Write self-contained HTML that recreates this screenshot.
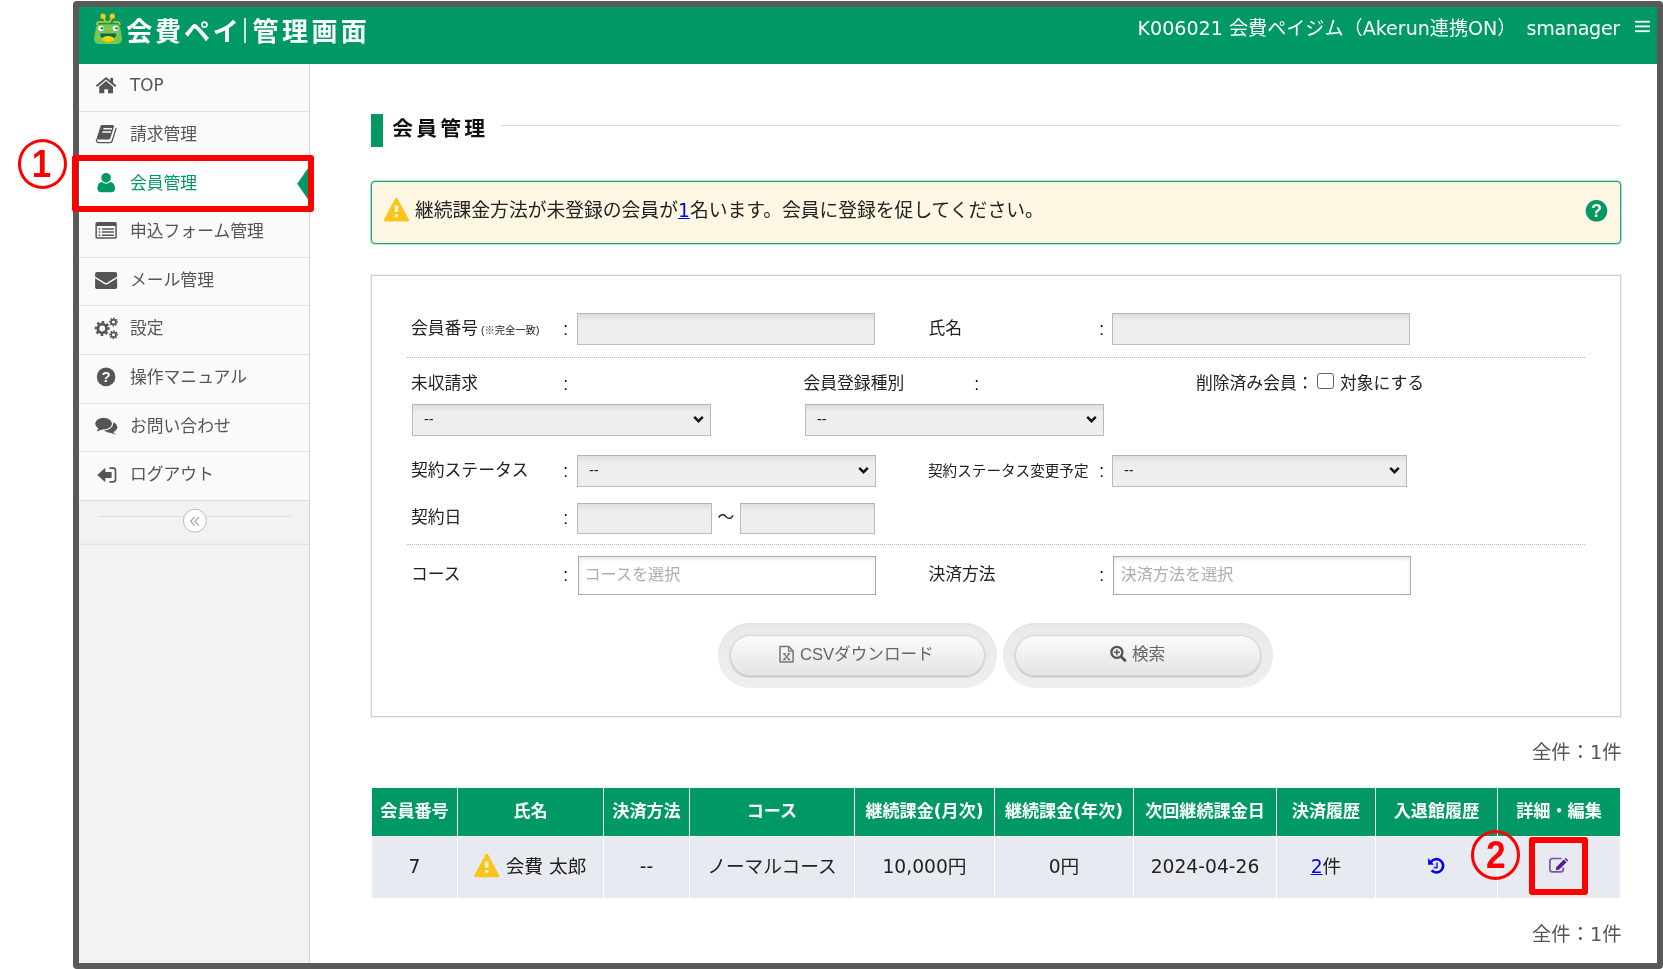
<!DOCTYPE html>
<html lang="ja">
<head>
<meta charset="utf-8">
<title>会費ペイ 管理画面</title>
<style>
*{box-sizing:border-box;margin:0;padding:0}
html,body{width:1663px;height:969px;overflow:hidden;background:#fff}
body{position:relative;font-family:"Liberation Sans","Noto Sans CJK JP",sans-serif;color:#222;font-size:16.6px}
.lat{font-family:"DejaVu Sans","Liberation Sans","Noto Sans CJK JP",sans-serif}
#frame{position:absolute;left:73px;top:1px;width:1590px;height:968px;border:6px solid #595959;border-radius:4px;background:#fff;overflow:hidden}
/* #o maps children to page coordinates */
#o{position:absolute;left:-79px;top:-7px;width:1663px;height:969px;will-change:transform}
#o div,#o span,#o svg,#o a{position:absolute;white-space:nowrap}
#o span.i,#o a.i{position:static}
#hdr{left:79px;top:7px;width:1578px;height:57px;background:#009966;color:#fff}
#hdr,#logo,#logo2,#lsep,#hdr-r{z-index:2}
#ico{z-index:3}
#logo,#logo2{top:11.5px;font-size:26px;font-weight:700;line-height:40px;color:#fff}
#logo2{left:252.6px;letter-spacing:3.4px}
#lsep{left:244.4px;top:18px;width:1.4px;height:24.5px;background:#c9eadf}
#hdr-r{left:1137.5px;top:16px;font-size:19.1px;line-height:26px;color:#fff}
#side{left:79px;top:64px;width:231px;height:899px;background:#f2f2f2;border-right:1px solid #d4d4d4}
.mi{left:79px;width:230px;height:48.6px;background:#fafafa;border-bottom:1px solid #e0e0e0;color:#555;font-size:16.8px;line-height:46.2px;padding-left:51px}
.mi.on{background:#fff;color:#009966}
#main{left:310px;top:64px;width:1347px;height:899px;background:#fff}

#tbar{left:370.5px;top:114px;width:12.5px;height:32.5px;background:#009966}
#ttl{left:392.3px;top:113px;font-size:20.8px;font-weight:700;letter-spacing:3.2px;line-height:32px;color:#111}
#tline{left:501px;top:125px;width:1119px;height:1px;background:#ddd}
#alert{left:371px;top:181px;width:1249.5px;height:63px;border:1px solid #1aa377;border-radius:4px;background:#fdf7e3;box-shadow:0 0 0 .6px rgba(26,163,119,.55)}
#atext{left:415px;top:197px;font-size:18.8px;line-height:28px;color:#222}
#atext a{color:#0000ee;text-decoration:underline}
#sbox{left:371px;top:275px;width:1249.5px;height:442px;border:1px solid #d0d0d0;background:#fff;box-shadow:0 0 0 .5px rgba(208,208,208,.6)}
.lb{font-size:16.8px;line-height:24px;color:#222}
.cl{font-size:17.6px;line-height:24px;color:#111;margin-left:.3px}
.inp{height:31.5px;border:1px solid #bbb;border-top-color:#b4b4b4;background:linear-gradient(#dfdfdf 0,#e3e3e3 2.5px,#eee 7px)}
.sel{height:31.5px;border:1px solid #bbb;border-top-color:#b4b4b4;background:linear-gradient(#dfdfdf 0,#e3e3e3 2.5px,#eee 7px);font-size:14.5px;line-height:29px;padding-left:11px;color:#222}
.sel svg{right:6px;top:10px;width:11px;height:9px}
.dot{left:407px;width:1178px;height:0;border-top:1px dotted #bbb}
.tin{height:39px;border:1px solid #aaa;background:#fff;box-shadow:inset 0 2px 4px rgba(0,0,0,.10);font-size:16.1px;line-height:34.5px;padding-left:5.5px;color:#adadad}

.bo{height:65px;border-radius:33px;background:linear-gradient(#e9e9e9,#efefef);box-shadow:inset 0 1px 2px rgba(0,0,0,.05)}
.bi{height:41px;border-radius:21px;background:linear-gradient(#fbfbfb,#e4e4e4);border:1px solid #d6d6d6;box-shadow:0 1px 2px rgba(0,0,0,.25);color:#666;font-size:16.6px;line-height:38px}
.cnt{font-size:19.3px;line-height:28px;color:#555}
.th{top:787.5px;height:48.5px;background:#009966;color:#fff;font-weight:700;font-size:17.1px;line-height:47px;text-align:center}
.td{top:837px;height:61px;background:#e8eaf2;color:#222;font-size:18.7px;line-height:60px;text-align:center}
.td a{color:#0000ee;text-decoration:underline}
</style>
</head>
<body>
<div id="frame"><div id="o">
  <div id="hdr"></div>
  <div id="logo" style="left:126.3px;letter-spacing:2.8px">会費ペイ</div><div id="lsep"></div><div id="logo2">管理画面</div>
  <div id="hdr-r" class="lat">K006021 会費ペイジム（Akerun連携ON） <span class="i" style="margin-left:4px;letter-spacing:-0.3px">smanager</span></div>
  <div id="main"></div>
  <div id="side"></div>
  <div class="mi lat" style="top:63.4px;line-height:45.8px">TOP</div>
  <div class="mi" style="top:112px">請求管理</div>
  <div class="mi on" style="top:160.6px">会員管理</div>
  <div class="mi" style="top:209.2px">申込フォーム管理</div>
  <div class="mi" style="top:257.8px">メール管理</div>
  <div class="mi" style="top:306.4px">設定</div>
  <div class="mi" style="top:355px">操作マニュアル</div>
  <div class="mi" style="top:403.6px">お問い合わせ</div>
  <div class="mi" style="top:452.2px">ログアウト</div>

  <div id="tbar"></div>
  <div id="ttl">会員管理</div>
  <div id="tline"></div>
  <div id="alert"></div>
  <div id="atext">継続課金方法が未登録の会員が<a class="i lat" href="#">1</a>名います。会員に登録を促してください。</div>
  <div id="sbox"></div>
  <div class="lb" style="left:411px;top:317px">会員番号<span class="i" style="font-size:10.3px"> (※完全一致)</span></div>
  <div class="cl" style="left:563px;top:317px">:</div>
  <div class="inp" style="left:577px;top:313px;width:297.5px"></div>
  <div class="lb" style="left:928.5px;top:317px">氏名</div>
  <div class="cl" style="left:1099px;top:317px">:</div>
  <div class="inp" style="left:1112px;top:313px;width:297.5px"></div>
  <div class="dot" style="top:357px"></div>
  <div class="lb" style="left:411px;top:371.5px">未収請求</div>
  <div class="cl" style="left:563px;top:371.5px">:</div>
  <div class="lb" style="left:803.5px;top:371.5px">会員登録種別</div>
  <div class="cl" style="left:974px;top:371.5px">:</div>
  <div class="lb" style="left:1196px;top:371.5px">削除済み会員：</div>
  <div id="cb" style="left:1316.5px;top:373px;width:17px;height:16px;border:1.5px solid #666;border-radius:3px;background:#fff"></div>
  <div class="lb" style="left:1340px;top:371.5px">対象にする</div>
  <div class="sel" style="left:412px;top:404px;height:32px;width:298.5px">--<svg viewBox="0 0 11 9"><path d="M1.2 1.8 L5.5 6.2 L9.8 1.8" fill="none" stroke="#111" stroke-width="2.4"/></svg></div>
  <div class="sel" style="left:805px;top:404px;height:32px;width:298.5px">--<svg viewBox="0 0 11 9"><path d="M1.2 1.8 L5.5 6.2 L9.8 1.8" fill="none" stroke="#111" stroke-width="2.4"/></svg></div>
  <div class="lb" style="left:411px;top:459px">契約ステータス</div>
  <div class="cl" style="left:563px;top:459px">:</div>
  <div class="sel" style="left:577px;top:455px;height:32px;width:298.5px">--<svg viewBox="0 0 11 9"><path d="M1.2 1.8 L5.5 6.2 L9.8 1.8" fill="none" stroke="#111" stroke-width="2.4"/></svg></div>
  <div class="lb" style="left:928px;top:459px;font-size:14.6px">契約ステータス変更予定</div>
  <div class="cl" style="left:1099px;top:459px">:</div>
  <div class="sel" style="left:1112px;top:455px;height:32px;width:295px">--<svg viewBox="0 0 11 9"><path d="M1.2 1.8 L5.5 6.2 L9.8 1.8" fill="none" stroke="#111" stroke-width="2.4"/></svg></div>
  <div class="lb" style="left:411px;top:506px">契約日</div>
  <div class="cl" style="left:563px;top:506px">:</div>
  <div class="inp" style="left:577px;top:503px;height:31px;width:135px"></div>
  <div class="lb" style="left:717.5px;top:506px">～</div>
  <div class="inp" style="left:740px;top:503px;height:31px;width:134.5px"></div>
  <div class="dot" style="top:544px"></div>
  <div class="lb" style="left:411px;top:563px">コース</div>
  <div class="cl" style="left:563px;top:563px">:</div>
  <div class="tin" style="left:578px;top:555.5px;width:297.5px">コースを選択</div>
  <div class="lb" style="left:928.5px;top:563px">決済方法</div>
  <div class="cl" style="left:1099px;top:563px">:</div>
  <div class="tin" style="left:1113px;top:555.5px;width:297.5px;padding-left:6.7px">決済方法を選択</div>

  <div class="bo" style="left:718px;top:622.5px;width:278.5px"></div>
  <div class="bi" style="left:730px;top:635px;width:254.5px"><span style="left:69px;top:0">CSVダウンロード</span></div>
  <div class="bo" style="left:1003px;top:622.5px;width:270px"></div>
  <div class="bi" style="left:1015px;top:635px;width:246px"><span style="left:116px;top:0">検索</span></div>
  <div class="cnt lat" style="right:41.5px;top:739px">全件：1件</div>

  <div class="th lat" style="left:372px;width:85px">会員番号</div>
  <div class="td lat" style="left:372px;width:85px">7</div>
  <div class="th lat" style="left:458px;width:145px">氏名</div>
  <div class="td lat" style="left:458px;width:145px"><span class="i" style="padding-left:31px">会費 太郎</span></div>
  <div class="th lat" style="left:604px;width:85px">決済方法</div>
  <div class="td lat" style="left:604px;width:85px">--</div>
  <div class="th lat" style="left:690px;width:164px">コース</div>
  <div class="td lat" style="left:690px;width:164px">ノーマルコース</div>
  <div class="th lat" style="left:855px;width:139px">継続課金(月次)</div>
  <div class="td lat" style="left:855px;width:139px">10,000円</div>
  <div class="th lat" style="left:995px;width:138px">継続課金(年次)</div>
  <div class="td lat" style="left:995px;width:138px">0円</div>
  <div class="th lat" style="left:1134px;width:142px">次回継続課金日</div>
  <div class="td lat" style="left:1134px;width:142px">2024-04-26</div>
  <div class="th lat" style="left:1277px;width:98px">決済履歴</div>
  <div class="td lat" style="left:1277px;width:98px"><a class="i" href="#">2</a>件</div>
  <div class="th lat" style="left:1376px;width:121px">入退館履歴</div>
  <div class="td lat" style="left:1376px;width:121px"></div>
  <div class="th lat" style="left:1498px;width:122px">詳細・編集</div>
  <div class="td lat" style="left:1498px;width:122px"></div>
  <div class="cnt lat" style="right:41.5px;top:920.5px">全件：1件</div>

  <svg id="ico" style="left:0;top:0;pointer-events:none" width="1663" height="969" viewBox="0 0 1663 969">
    <!-- frog logo -->
    <g>
      <path d="M98.6 24.6 Q108 23.8 117.8 24.6 Q119.8 24.9 120.2 27.5 Q120.8 31.5 121.6 35 Q123.4 43.8 117 44 L99 44 Q92.6 43.8 94.6 35 Q95.4 31.5 96 27.5 Q96.5 24.9 98.6 24.6 Z" fill="#78c850"/>
      <circle cx="101" cy="28.2" r="2.8" fill="#fff"/><circle cx="115.5" cy="28.2" r="2.8" fill="#fff"/>
      <circle cx="102.1" cy="28.2" r="1.3" fill="#1f7d66"/><circle cx="116.6" cy="28.2" r="1.3" fill="#1f7d66"/>
      <path d="M100.2 33.6 H116.2 Q116.6 39.8 108.2 39.8 Q99.8 39.8 100.2 33.6 Z" fill="#0a6b55"/>
      <ellipse cx="108.2" cy="39" rx="6.2" ry="2.9" fill="#ffcc00"/>
      <path d="M97 24.2 Q97 22 99.2 22 H109.6 L112.3 16.8" fill="none" stroke="#dfc60e" stroke-width="1.7" stroke-linecap="round" stroke-linejoin="round"/>
      <path d="M113.8 22 H117.6 Q119.6 22 119.7 24.2" fill="none" stroke="#dfc60e" stroke-width="1.7" stroke-linecap="round"/>
      <circle cx="112.3" cy="16.2" r="2.6" fill="#ffcc00"/><circle cx="103" cy="16.2" r="2.6" fill="#ffcc00"/>
      <path d="M103.6 17 L104.8 20.4" stroke="#ffcc00" stroke-width="1.6" stroke-linecap="round"/>
    </g>
    <!-- hamburger -->
    <rect x="1635" y="20.8" width="14.8" height="1.8" fill="#fff"/><rect x="1635" y="25.5" width="14.8" height="1.8" fill="#fff"/><rect x="1635" y="30.3" width="14.8" height="1.8" fill="#fff"/>
    <!-- home -->
    <path d="M96.4 86.2 L106.1 78.3 L115.8 86.2" fill="none" stroke="#555" stroke-width="1.9"/>
    <rect x="110.3" y="77.9" width="2.8" height="5.2" fill="#555"/>
    <path d="M99.2 86.7 L106.1 81 L113 86.7 V93.3 H108 V89.2 H104.3 V93.3 H99.2 Z" fill="#555"/>
    <!-- book -->
    <path d="M101.9 125.1 H112.6 Q114.4 125.1 113.9 126.9 L110.2 138.4 Q109.9 139.4 108.8 139.4 H97.6 Q96.3 139.4 96.7 138.1 L100.6 126.1 Q100.9 125.1 101.9 125.1 Z" fill="#555"/>
    <path d="M103.4 128.8 H112 M102.4 131.9 H111" stroke="#fafafa" stroke-width="1.5"/>
    <path d="M96.5 139.6 Q96 142.6 99 142.6 H110 Q111.6 142.6 112.1 141 L116.1 128.4" fill="none" stroke="#555" stroke-width="1.3" stroke-linecap="round"/>
    <!-- user -->
    <path d="M97.4 188.6 C97.4 184 99.8 182 102 182 L110.2 182 C112.4 182 115 184 115 188.6 C115 191 113.4 192.3 111.4 192.3 L101 192.3 C99 192.3 97.4 191 97.4 188.6 Z" fill="#009966"/>
    <circle cx="106.1" cy="177.8" r="5.4" fill="#009966" stroke="#fff" stroke-width="1.1"/>
    <!-- active arrow -->
    <path d="M309.5 166 L297.2 183.7 L309.5 201.5 Z" fill="#009966"/>
    <!-- list-alt -->
    <rect x="95.4" y="222" width="21.4" height="16.7" rx="1.8" fill="#555"/>
    <rect x="96.9" y="226" width="18.4" height="11.3" rx=".5" fill="#fafafa"/>
    <path d="M98.6 228.9 h1.7 M98.6 232.1 h1.7 M98.6 235.3 h1.7 M101.9 228.9 h12 M101.9 232.1 h12 M101.9 235.3 h12" stroke="#555" stroke-width="1.5"/>
    <!-- envelope -->
    <rect x="95.1" y="271.9" width="22" height="17.2" rx="1.8" fill="#555"/>
    <path d="M94.6 277.2 L104.7 283.4 Q106.1 284.3 107.5 283.4 L117.6 277.2" fill="none" stroke="#fafafa" stroke-width="1.4"/>
    <!-- cogs -->
    <circle cx="102.2" cy="328.5" r="6.4" fill="none" stroke="#555" stroke-width="2.2" stroke-dasharray="2.513 2.513" transform="rotate(-11.25 102.2 328.5)"/><circle cx="102.2" cy="328.5" r="4.3" fill="none" stroke="#555" stroke-width="2.8"/><circle cx="113.5" cy="322" r="3.7" fill="none" stroke="#555" stroke-width="1.5" stroke-dasharray="1.453 1.453" transform="rotate(-11.25 113.5 322)"/><circle cx="113.5" cy="322" r="2.4" fill="none" stroke="#555" stroke-width="1.7"/><circle cx="113.5" cy="334.7" r="3.7" fill="none" stroke="#555" stroke-width="1.5" stroke-dasharray="1.453 1.453" transform="rotate(-11.25 113.5 334.7)"/><circle cx="113.5" cy="334.7" r="2.4" fill="none" stroke="#555" stroke-width="1.7"/>
    <!-- question -->
    <circle cx="106.1" cy="376.9" r="9.3" fill="#555"/>
    <text x="106.1" y="382.3" text-anchor="middle" font-family="Liberation Sans,sans-serif" font-weight="700" font-size="15" fill="#fafafa">?</text>
    <!-- comments -->
    <ellipse cx="110" cy="427.2" rx="7.3" ry="5.5" fill="#555"/><path d="M112.6 431.4 L115.6 434.8 L109.8 432.6 Z" fill="#555"/>
    <ellipse cx="103.6" cy="423.6" rx="9.6" ry="7" fill="#fafafa"/>
    <ellipse cx="103.6" cy="423.6" rx="8.4" ry="5.8" fill="#555"/><path d="M98.7 427.6 L96.8 431.6 L102.8 429.2 Z" fill="#555"/>
    <!-- logout -->
    <path d="M97.3 475 L105.3 467.8 V471.9 H111.6 V478 H105.3 V482.2 Z" fill="#555"/>
    <path d="M109.4 468.2 H113 Q115.5 468.2 115.5 470.7 V479.3 Q115.5 481.8 113 481.8 H109.4" fill="none" stroke="#555" stroke-width="1.7"/>
    <!-- collapse -->
    <rect x="97.8" y="516" width="192.4" height="1" fill="#ddd"/>
    <circle cx="194.9" cy="520.7" r="11.5" fill="#fff" stroke="#bbb" stroke-width="1"/>
    <path d="M194.7 517 L190.6 521.3 L194.7 525.6 M199.1 517 L195 521.3 L199.1 525.6" fill="none" stroke="#aaa" stroke-width="1.3"/>
    <rect x="79" y="543.8" width="230" height="1" fill="#ddd"/>
    <!-- warnings -->
    <g transform="translate(383.7 197.3)"><path d="M12.75 1.7 L1.5 22.8 L24 22.8 Z" fill="#fac51a" stroke="#fac51a" stroke-width="2.6" stroke-linejoin="round"/><rect x="10.9" y="8.2" width="3.7" height="6.3" fill="#fdf3d0"/><rect x="11.1" y="16.9" width="3.3" height="3" fill="#fdf3d0"/></g><g transform="translate(474 853.1)"><path d="M12.75 1.7 L1.5 22.8 L24 22.8 Z" fill="#fac51a" stroke="#fac51a" stroke-width="2.6" stroke-linejoin="round"/><rect x="10.9" y="8.2" width="3.7" height="6.3" fill="#fdf3d0"/><rect x="11.1" y="16.9" width="3.3" height="3" fill="#fdf3d0"/></g>
    <!-- help -->
    <circle cx="1596.5" cy="210.8" r="10.8" fill="#009966"/>
    <text x="1596.5" y="217.3" text-anchor="middle" font-family="Liberation Sans,sans-serif" font-weight="700" font-size="18" fill="#fdf7e3">?</text>
    <!-- file excel -->
    <path d="M780 646.6 H788.8 L793.1 651 V662 H780 Z" fill="none" stroke="#777" stroke-width="1.5" stroke-linejoin="round"/>
    <path d="M788.6 646.6 V651.2 H793.1" fill="none" stroke="#777" stroke-width="1.3"/>
    <path d="M783.9 653.9 L789.3 659.5 M789.3 653.9 L783.9 659.5 M783 653.7 h2.6 M787.6 653.7 h2.6 M783 659.7 h2.6 M787.6 659.7 h2.6" stroke="#777" stroke-width="1.2"/>
    <!-- search plus -->
    <circle cx="1116.9" cy="652.3" r="5.5" fill="none" stroke="#555" stroke-width="2.3"/>
    <path d="M1121 656.4 L1125 660.4" stroke="#555" stroke-width="2.8" stroke-linecap="round"/>
    <path d="M1113.9 652.3 H1119.9 M1116.9 649.3 V655.3" stroke="#555" stroke-width="1.5"/>
    <!-- history -->
    <path d="M1430.8 862.2 A6.7 6.7 0 1 1 1431.6 870.4" fill="none" stroke="#0000ee" stroke-width="2.6"/>
    <path d="M1428.1 858 V864.8 H1434 Z" fill="#0000ee"/>
    <path d="M1437 862.4 V867.6 H1433.6" fill="none" stroke="#2a2af0" stroke-width="1.7"/>
    <!-- edit -->
    <path d="M1561.6 858.5 H1552.6 Q1549.9 858.5 1549.9 861.2 V869.2 Q1549.9 871.9 1552.6 871.9 H1560.6 Q1563.3 871.9 1563.3 869.2 V867.4" fill="none" stroke="#7a52a6" stroke-width="1.7"/>
    <path d="M1557.6 868.5 L1565.2 860.9" stroke="#551a8b" stroke-width="3.8"/>
    <path d="M1566 860.1 L1567 859.1" stroke="#551a8b" stroke-width="3.8"/>
    <path d="M1555.8 870.2 L1556.3 867.1 L1558.9 869.8 Z" fill="#551a8b"/>
  </svg>

</div></div>

<div style="position:absolute;left:72px;top:155px;width:242px;height:57px;border:6px solid #ff0000;border-radius:3px"></div>
<div style="position:absolute;left:17.7px;top:138.8px;width:49.6px;height:50px;border:3px solid #ff0000;border-radius:50%"></div>
<div style="position:absolute;left:17.5px;top:139px;width:50px;height:50px;color:#ff0000;font:700 38px/50px 'Liberation Sans',sans-serif;text-align:center;transform:translateX(-1.6px) scaleX(.92)">1</div>
<div style="position:absolute;left:1529px;top:836.5px;width:59px;height:58.5px;border:6px solid #ff0000;border-radius:3px"></div>
<div style="position:absolute;left:1471px;top:830px;width:49.3px;height:50px;border:3px solid #ff0000;border-radius:50%"></div>
<div style="position:absolute;left:1471px;top:830px;width:49.5px;height:49.5px;color:#ff0000;font:700 38px/50px 'Liberation Sans',sans-serif;text-align:center;transform:translate(0,0) scaleX(.93)">2</div>

</body>
</html>
